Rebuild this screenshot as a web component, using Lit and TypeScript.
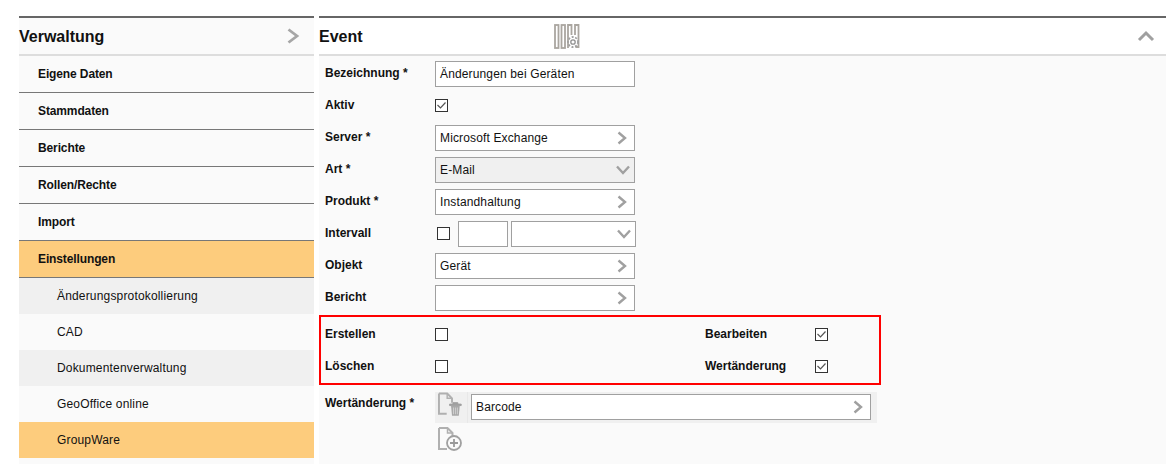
import { LitElement, html, css, svg } from "lit";
import { customElement } from "lit/decorators.js";

const chevR = html`<svg class="chev" width="12" height="14" viewBox="0 0 12 14"><path d="M2.500 1.500 9 7l-6.500 5.500" fill="none" stroke="#a0a0a0" stroke-width="2.400"/></svg>`;
const chevD = html`<svg class="chev" width="16" height="12" viewBox="0 0 16 12"><path d="M2 2.500 8 9l6-6.500" fill="none" stroke="#a0a0a0" stroke-width="2.400"/></svg>`;
const check = html`<svg width="13" height="13" viewBox="0 0 13 13"><path d="M2.500 6 5.500 9 10.500 3.500" fill="none" stroke="#555" stroke-width="1.200"/></svg>`;
const docPath = svg`<path d="M1 1h8.500l5 5v4.500M1 1v21h8" fill="none" stroke="#b0b0b0" stroke-width="2"/><path d="M9.500 1v5h5" fill="none" stroke="#b0b0b0" stroke-width="1.500"/>`;

@customElement("app-root")
export class AppRoot extends LitElement {
  static styles = css`
    :host { display: block; height: 464px; overflow: hidden; background: #fff; font-family: "Liberation Sans", Arial, sans-serif; font-size: 12px; color: #111; }
    .page { display: flex; gap: 5px; padding: 16px 3px 0 19px; height: 448px; }
    .side { width: 295px; background: #fafafa; flex: none; }
    .main { flex: 1; background: #fafafa; }
    .head { height: 36px; box-sizing: content-box; border-top: 2px solid #666; border-bottom: 2px solid #ddd; display: flex; align-items: center; justify-content: space-between; font: bold 16px "Liberation Sans", Arial, sans-serif; color: #111; }
    .head > span { padding-top: 2px; }
    .side .head { padding-right: 14px; }
    .main .head { background: #fff; padding-right: 11px; position: relative; }
    .bars { position: absolute; left: 235px; top: 6px; }
    .menu { display: flex; flex-direction: column; }
    .item { height: 36px; border-bottom: 1px solid #777; display: flex; align-items: center; padding-left: 19px; font-weight: bold; letter-spacing: -0.12px; }
    .item.last { border-bottom: none; height: 36px; }
    .item.on { background: #fdcc7d; border-top: 1px solid #777; }
    .sub { height: 36px; display: flex; align-items: center; padding-left: 38px; letter-spacing: 0.17px; }
    .sub.odd { background: #f0f0f0; }
    .sub.on { background: #fdcc7d; }
    .form { padding-top: 5px; }
    .row { display: grid; grid-template-columns: 110px 200px; height: 32px; padding-left: 6px; align-items: start; }
    .lbl { font-weight: bold; line-height: 14px; padding-top: 5px; }
    .inp { box-sizing: border-box; height: 26px; width: 200px; border: 1px solid #a0a0a0; background: #fff; display: flex; align-items: center; justify-content: space-between; padding: 0 6px 0 4px; letter-spacing: 0.14px; }
    .inp.dis { background: #f0f0f0; padding-right: 3px; }
    .cb { box-sizing: border-box; width: 13px; height: 13px; border: 1px solid #333; background: #fff; display: block; }
    .cb svg { display: block; margin: -1px; }
    .cbw { padding-top: 6px; }
    .iv { display: flex; gap: 3px; width: 201px; }
    .iv .cb { margin: 6px 0 0 2px; }
    .iv .n { box-sizing: border-box; height: 26px; width: 50px; border: 1px solid #a0a0a0; background: #fff; margin-left: 5px; }
    .iv .s { box-sizing: border-box; height: 26px; width: 125px; border: 1px solid #a0a0a0; background: #fff; display: flex; align-items: center; justify-content: flex-end; padding-right: 3px; }
    .red { box-sizing: border-box; width: 562px; height: 70px; border: 2px solid #f00; margin-top: -2px; display: grid; grid-template-columns: 110px 270px 110px 1fr; grid-auto-rows: 32px; padding: 9px 0 0 4px; align-items: start; }
    .red .lbl { padding-top: 1px; }
    .red .c { padding-top: 2px; }
    .wert { display: grid; grid-template-columns: 110px 1fr; padding: 7px 0 0 6px; }
    .wert .lbl { padding-top: 4px; }
    .bar { width: 442px; height: 31px; background: #f0f0f0; display: flex; align-items: flex-start; box-sizing: border-box; padding: 0 0 0 3px; }
    .bar .ic { width: 30px; height: 31px; flex: none; border-right: 1px solid #e8e8e8; box-sizing: border-box; }
    .bar .inp { width: 400px; margin: 2px 0 0 3px; }
    .add { display: block; margin: 4px 0 0 3px; }
  `;

  render() {
    const field = (l: string, v: string, c = chevR, cls = "") => html`
      <div class="row"><div class="lbl">${l}</div><div class="inp ${cls}"><span>${v}</span>${c}</div></div>`;
    return html`<div class="page">
      <div class="side">
        <div class="head"><span>Verwaltung</span><svg width="14" height="16" viewBox="0 0 14 16"><path d="M2.500 1.500 11 8l-8.500 6.500" fill="none" stroke="#a6a6a6" stroke-width="2.800"/></svg></div>
        <div class="menu">
          <div class="item">Eigene Daten</div>
          <div class="item">Stammdaten</div>
          <div class="item">Berichte</div>
          <div class="item">Rollen/Rechte</div>
          <div class="item last">Import</div>
          <div class="item on">Einstellungen</div>
          <div class="sub odd">Änderungsprotokollierung</div>
          <div class="sub">CAD</div>
          <div class="sub odd">Dokumentenverwaltung</div>
          <div class="sub">GeoOffice online</div>
          <div class="sub on">GroupWare</div>
        </div>
      </div>
      <div class="main">
        <div class="head"><span>Event</span>
          <svg class="bars" width="26" height="25" viewBox="0 0 26 25">
            <g fill="none" stroke="#aaa6a0" stroke-width="1.800">
              <rect x="1" y="1" width="3.500" height="23"/><rect x="7.500" y="1" width="3.500" height="23"/>
              <path d="M14 24V1h3.500v10M21 11V1h3.500v22h-3"/>
            </g>
            <circle cx="19" cy="18" r="2.200" fill="none" stroke="#909090" stroke-width="1.300"/>
            <circle cx="19" cy="18" r="5" fill="none" stroke="#a0a0a0" stroke-width="1.800" stroke-dasharray="2 1.600"/>
          </svg>
          <svg width="18" height="12" viewBox="0 0 18 12"><path d="M2 10 9 3l7 7" fill="none" stroke="#a0a0a0" stroke-width="3"/></svg>
        </div>
        <div class="form">
          ${field("Bezeichnung *", "Änderungen bei Geräten", html``)}
          <div class="row"><div class="lbl">Aktiv</div><div class="cbw"><span class="cb">${check}</span></div></div>
          ${field("Server *", "Microsoft Exchange")}
          ${field("Art *", "E-Mail", chevD, "dis")}
          ${field("Produkt *", "Instandhaltung")}
          <div class="row"><div class="lbl">Intervall</div><div class="iv"><span class="cb"></span><div class="n"></div><div class="s">${chevD}</div></div></div>
          ${field("Objekt", "Gerät")}
          ${field("Bericht", "")}
          <div class="red">
            <div class="lbl">Erstellen</div><div class="c"><span class="cb"></span></div>
            <div class="lbl">Bearbeiten</div><div class="c"><span class="cb">${check}</span></div>
            <div class="lbl">Löschen</div><div class="c"><span class="cb"></span></div>
            <div class="lbl">Wertänderung</div><div class="c"><span class="cb">${check}</span></div>
          </div>
          <div class="wert">
            <div class="lbl">Wertänderung *</div>
            <div>
              <div class="bar">
                <svg class="ic" viewBox="0 0 30 31">
                  ${docPath}
                  <path d="M12 12h12v1.500H12zM15.500 12v-1.500h5V12" fill="#a0a0a0" stroke="#a0a0a0"/>
                  <path d="M13.500 14h9l-1 10h-7z" fill="#a8a8a8"/>
                  <path d="M16 15.500v7M18 15.500v7M20 15.500v7" stroke="#e4e4e4" stroke-width=".7"/>
                </svg>
                <div class="inp"><span>Barcode</span>${chevR}</div>
              </div>
              <svg class="add" width="26" height="26" viewBox="0 0 26 26">
                ${docPath}
                <circle cx="16" cy="16" r="7" fill="#fafafa" stroke="#a0a0a0" stroke-width="1.800"/>
                <path d="M16 12v8M12 16h8" stroke="#999" stroke-width="1.800"/>
              </svg>
            </div>
          </div>
        </div>
      </div>
    </div>`;
  }
}
